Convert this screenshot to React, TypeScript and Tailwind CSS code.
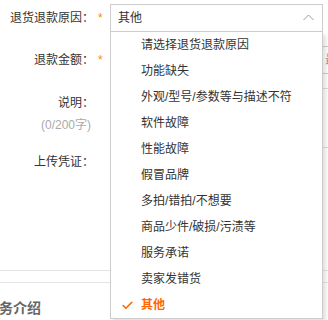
import { Check } from "lucide-react";

const REASONS = [
  "请选择退货退款原因",
  "功能缺失",
  "外观/型号/参数等与描述不符",
  "软件故障",
  "性能故障",
  "假冒品牌",
  "多拍/错拍/不想要",
  "商品少件/破损/污渍等",
  "服务承诺",
  "卖家发错货",
  "其他",
];

const SELECTED = "其他";

function Label({ text, required }: { text: string; required?: boolean }) {
  return (
    <>
      <div className="w-[94px] shrink-0 text-right">{text}</div>
      <div className="w-[16px] shrink-0 pl-[4px] text-[#ff8a00]">{required ? "*" : ""}</div>
    </>
  );
}

export default function App() {
  return (
    <div
      className="relative h-[320px] w-[328px] overflow-hidden bg-white pt-[4px] text-[12px] leading-[20px] text-[#333]"
      style={{ fontFamily: '"Liberation Sans", "Noto Sans CJK SC", sans-serif' }}
    >
      {/* reason select */}
      <div className="flex h-[28px] items-center">
        <Label text="退货退款原因：" required />
        <div className="flex h-[28px] w-[213px] shrink-0 items-center justify-between border border-[#ccc] pl-[7px] pr-[8px]">
          <span>其他</span>
          <svg width="11" height="7" viewBox="0 0 11 7" className="mt-[-2px]">
            <polyline points="0.5,6 5.5,1 10.5,6" fill="none" stroke="#999" strokeWidth="1" />
          </svg>
        </div>
      </div>

      {/* amount */}
      <div className="mt-[14px] flex h-[28px] items-center">
        <Label text="退款金额：" required />
        <div className="flex h-[28px] w-[260px] shrink-0 items-center border border-[#ccc] pl-[214px] text-[#999]">
          <span className="whitespace-nowrap">最多</span>
        </div>
      </div>

      {/* description */}
      <div className="mt-[14px] flex h-[60px]">
        <div className="w-[94px] shrink-0 pt-[5px] text-right">
          <div>说明：</div>
          <div className="mt-[2px] pr-[3px] text-[#aaa]">(0/200字)</div>
        </div>
        <div className="w-[16px] shrink-0" />
        <div className="h-[60px] w-[260px] shrink-0 border border-[#ddd]" />
      </div>

      {/* upload */}
      <div className="mt-[4px] flex">
        <Label text="上传凭证：" />
      </div>

      <div className="h-[99px] border-b border-[#e5e5e5]" />
      <div className="h-[12px] border-b border-[#e5e5e5]" />
      <div className="ml-[-15px] mt-[15px] text-[14px] font-bold leading-[20px] text-[#666]">服务介绍</div>

      {/* open dropdown */}
      <ul className="absolute left-[110px] top-[32px] w-[213px] border border-t-0 border-[#ccc] bg-white shadow-[3px_3px_4px_rgba(0,0,0,0.12)]">
        {REASONS.map((r) => {
          const active = r === SELECTED;
          return (
            <li
              key={r}
              className={
                active
                  ? "relative flex h-[26px] items-center pl-[30px] font-bold text-[#ff6600]"
                  : "relative flex h-[26px] items-center pl-[30px] text-[#333]"
              }
            >
              {active && (
                <Check className="absolute left-[10px] top-[7px] h-[13px] w-[13px] text-[#ff6600]" strokeWidth={3} />
              )}
              {r}
            </li>
          );
        })}
      </ul>
    </div>
  );
}
